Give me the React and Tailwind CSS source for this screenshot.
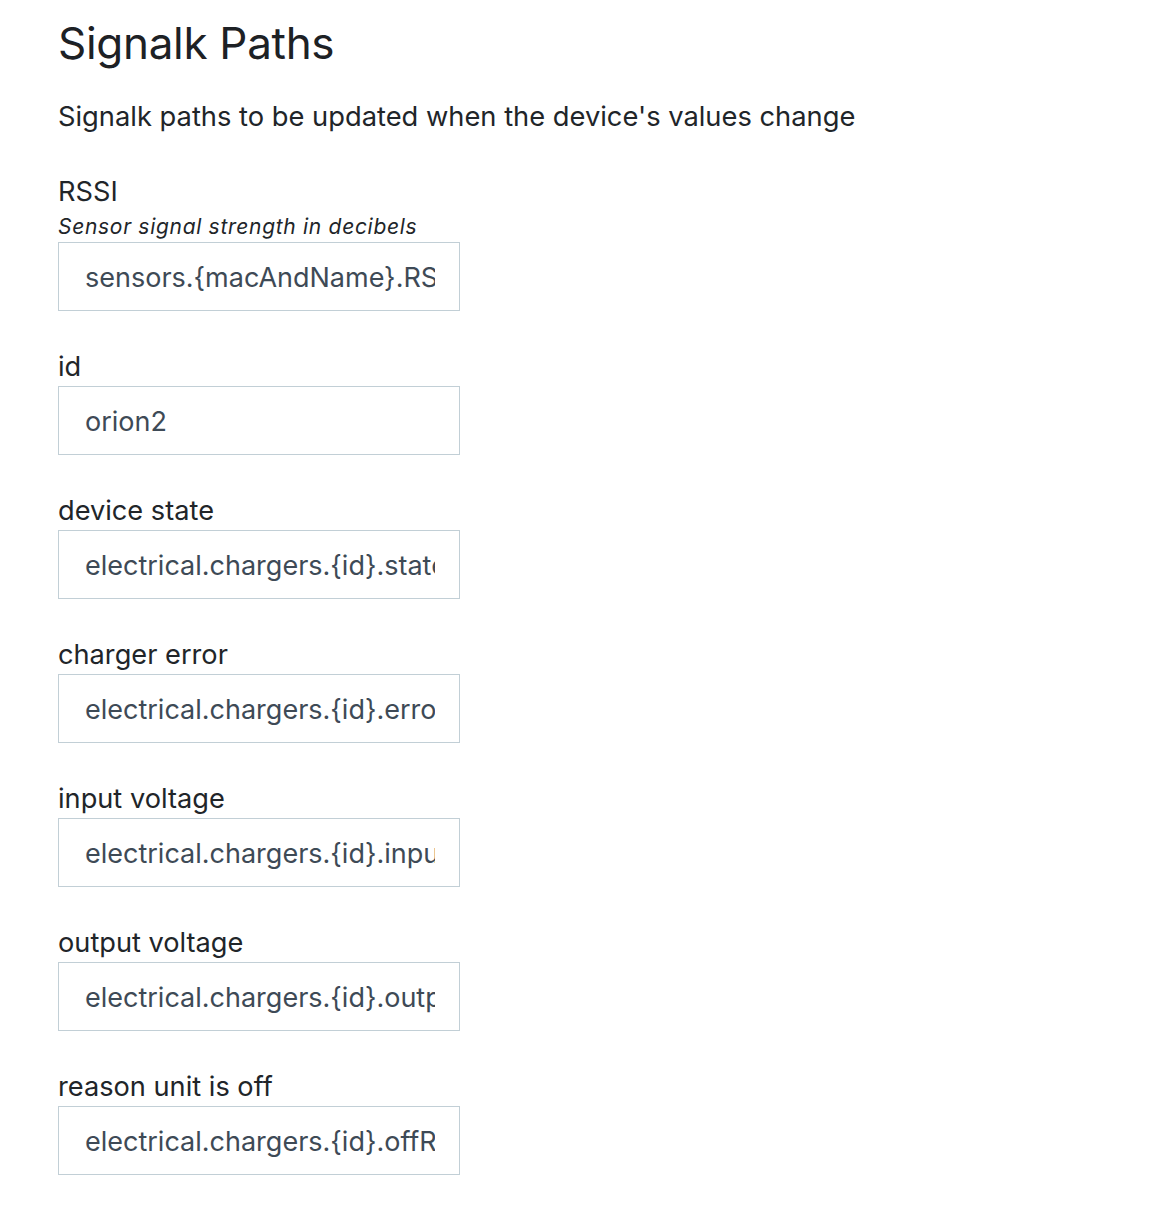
const fields = [
  { label: "RSSI", help: "Sensor signal strength in decibels", value: "sensors.{macAndName}.RSSI" },
  { label: "id", value: "orion2" },
  { label: "device state", value: "electrical.chargers.{id}.state" },
  { label: "charger error", value: "electrical.chargers.{id}.error" },
  { label: "input voltage", value: "electrical.chargers.{id}.inputVoltage" },
  { label: "output voltage", value: "electrical.chargers.{id}.outputVoltage" },
  { label: "reason unit is off", value: "electrical.chargers.{id}.offReason" },
];

export default function App() {
  return (
    <div className="min-h-[1218px] bg-white pl-[58px] pt-[14px] font-['Inter',sans-serif] text-[#212529]">
      <h1 className="text-[44px] leading-[58px] font-normal text-[#1d2125] tracking-[-0.3px]">Signalk Paths</h1>
      <p className="mt-[28px] text-[27.3px] leading-[34px]">
        Signalk paths to be updated when the device's values change
      </p>
      <div className="mt-[41px] flex flex-col gap-[39px]">
        {fields.map((f) => (
          <div key={f.label} className="flex flex-col">
            <label className="text-[27.2px] leading-[34px]">{f.label}</label>
            {f.help ? (
              <span className="mt-[5px] text-[21px] leading-[26px] italic tracking-[0.7px]">{f.help}</span>
            ) : null}
            <input
              readOnly
              value={f.value}
              className="mt-[2px] h-[69px] w-[402px] border border-[#c2cfd6] bg-white pl-[26px] pr-[24px] pt-[2px] text-[27px] text-[#3e4a56] outline-none"
            />
          </div>
        ))}
      </div>
    </div>
  );
}
